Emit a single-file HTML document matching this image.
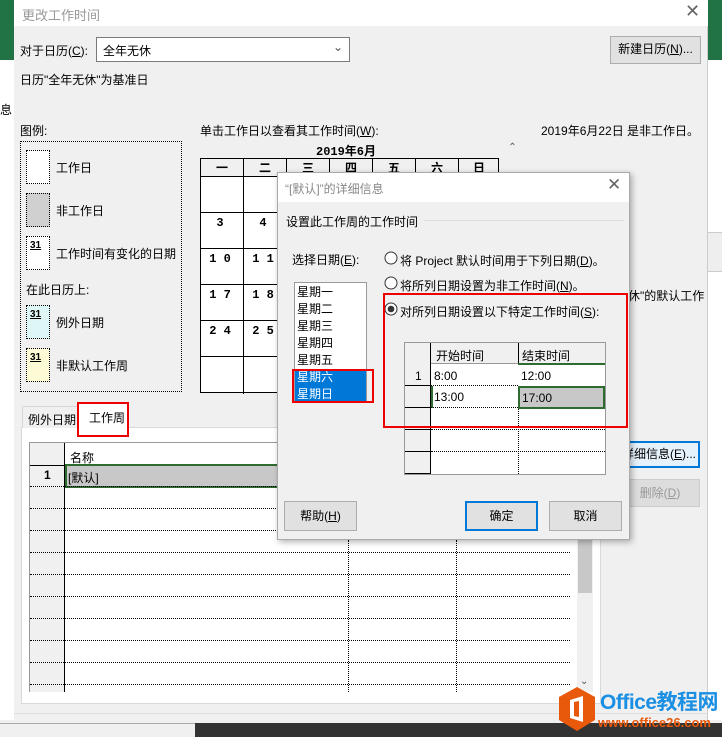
<!DOCTYPE html>
<html><head><meta charset="utf-8"><style>
*{box-sizing:border-box;margin:0;padding:0}
body{width:722px;height:737px;overflow:hidden;background:#f0f0f0;position:relative;font-family:"Liberation Sans","Noto Sans CJK SC",sans-serif;font-size:12px;color:#000}
.a{position:absolute;white-space:nowrap}
.btn{position:absolute;background:#e1e1e1;border:1px solid #adadad;text-align:center;font-size:12px;white-space:nowrap;overflow:hidden}
.dot{border:1px dotted #000}
.g{position:absolute;border-bottom:1px dotted #000}
</style></head><body>
<div class="a" style="left:0;top:0;width:14px;height:60px;background:#217346"></div>
<div class="a" style="left:0;top:60px;width:14px;height:660px;background:#fff"></div>
<div class="a" style="left:0;top:101px;width:14px;font-size:12px">息</div>
<div class="a" style="left:708px;top:0;width:14px;height:60px;background:#217346"></div>
<div class="a" style="left:708px;top:60px;width:14px;height:660px;background:#fff"></div>
<div class="a" style="left:708px;top:232px;width:14px;height:40px;background:#eee;border-top:1px solid #ccc;border-bottom:1px solid #ccc"></div>
<div class="a" style="left:14px;top:0;width:694px;height:723px;background:#f0f0f0;border-right:1px solid #ccc"></div>
<div class="a" style="left:14px;top:0;width:694px;height:26px;background:#fff"></div>
<div class="a" style="left:22px;top:5px;color:#999;font-size:13px">更改工作时间</div>
<div class="a" style="left:685px;top:1px;color:#666;font-size:18px">✕</div>
<div class="a" style="left:20px;top:42px">对于日历(<u>C</u>):</div>
<div class="a" style="left:96px;top:37px;width:254px;height:25px;background:#fff;border:1px solid #7a7a7a;padding:4px 6px">全年无休<span style="position:absolute;right:6px;top:2px;color:#555">⌄</span></div>
<div class="btn" style="left:610px;top:36px;width:91px;height:28px;line-height:25px">新建日历(<u>N</u>)...</div>
<div class="a" style="left:20px;top:71px">日历"全年无休"为基准日</div>
<div class="a" style="left:20px;top:122px">图例:</div>
<div class="a dot" style="left:20px;top:141px;width:162px;height:251px"></div>
<div class="a dot" style="left:26px;top:150px;width:24px;height:34px;background:#fff"></div>
<div class="a" style="left:56px;top:159px">工作日</div>
<div class="a dot" style="left:26px;top:193px;width:24px;height:34px;background:#d0d0d0"></div>
<div class="a" style="left:56px;top:202px">非工作日</div>
<div class="a dot" style="left:26px;top:236px;width:24px;height:34px;background:#fff"><b style="font-size:10px;text-decoration:underline;margin-left:3px">31</b></div>
<div class="a" style="left:56px;top:245px">工作时间有变化的日期</div>
<div class="a" style="left:26px;top:281px">在此日历上:</div>
<div class="a dot" style="left:26px;top:305px;width:24px;height:34px;background:#dff6f6"><b style="font-size:10px;text-decoration:underline;margin-left:3px">31</b></div>
<div class="a" style="left:56px;top:314px">例外日期</div>
<div class="a dot" style="left:26px;top:348px;width:24px;height:34px;background:#fdfbd6"><b style="font-size:10px;text-decoration:underline;margin-left:3px">31</b></div>
<div class="a" style="left:56px;top:357px">非默认工作周</div>
<div class="a" style="left:200px;top:122px">单击工作日以查看其工作时间(<u>W</u>):</div>
<div class="a" style="left:316px;top:142px;font-weight:bold;font-family:'Liberation Mono','Noto Sans CJK SC',monospace">2019年6月</div>
<svg class="a" style="left:200px;top:158px" width="300" height="236">
<rect x="0.5" y="0.5" width="298" height="234" fill="#fff" stroke="#000"/>
<rect x="1" y="1" width="297" height="17" fill="#f0f0f0"/>
<g stroke="#000"><line x1="0" y1="18.5" x2="300" y2="18.5"/><line x1="0" y1="54.5" x2="300" y2="54.5"/><line x1="0" y1="90.5" x2="300" y2="90.5"/><line x1="0" y1="126.5" x2="300" y2="126.5"/><line x1="0" y1="162.5" x2="300" y2="162.5"/><line x1="0" y1="198.5" x2="300" y2="198.5"/>
<line x1="43.5" y1="0" x2="43.5" y2="236"/><line x1="86.5" y1="0" x2="86.5" y2="236"/><line x1="129.5" y1="0" x2="129.5" y2="236"/><line x1="172.5" y1="0" x2="172.5" y2="236"/><line x1="215.5" y1="0" x2="215.5" y2="236"/><line x1="258.5" y1="0" x2="258.5" y2="236"/></g>
<g font-size="12" font-weight="bold" font-family="Liberation Mono,Noto Sans CJK SC,monospace" text-anchor="middle"><text x="22" y="14">一</text><text x="65" y="14">二</text><text x="108" y="14">三</text><text x="151" y="14">四</text><text x="194" y="14">五</text><text x="237" y="14">六</text><text x="279" y="14">日</text>
<text x="20" y="68">3</text><text x="63" y="68">4</text><text x="20" y="104">1 0</text><text x="63" y="104">1 1</text><text x="20" y="140">1 7</text><text x="63" y="140">1 8</text><text x="20" y="176">2 4</text><text x="63" y="176">2 5</text></g>
</svg>
<div class="a" style="left:504px;top:142px;width:17px;height:250px;background:#f0f0f0;font-size:10px;color:#555;text-align:center">⌃</div>
<div class="a" style="left:541px;top:122px">2019年6月22日 是非工作日。</div>
<div class="a" style="left:628px;top:287px">休"的默认工作</div>
<div class="a" style="left:21px;top:427px;width:580px;height:277px;background:#fff;border:1px solid #d9d9d9"></div>
<div class="a" style="left:22px;top:406px;width:56px;height:22px;border:1px solid #d9d9d9;border-bottom:none;padding:4px 0 0 5px;background:#f0f0f0">例外日期</div>
<div class="a" style="left:78px;top:402px;width:50px;height:26px;background:#fff;border:1px solid #d9d9d9;border-bottom:none;padding:6px 0 0 10px">工作周</div>
<div class="a" style="left:77px;top:402px;width:52px;height:35px;border:2px solid #e00"></div>
<div class="a" style="left:29px;top:442px;width:542px;height:250px;background:#fff;border-left:1px solid #999;border-top:1px solid #999"></div>
<div class="a" style="left:30px;top:443px;width:35px;height:249px;background:#f0f0f0;border-right:1px solid #000"></div>
<div class="a" style="left:70px;top:449px">名称</div>
<div class="a" style="left:65px;top:464px;width:290px;height:24px;background:#c8c8c8;border:2px solid #2e6b2e;padding:3px 0 0 1px">[默认]</div>
<div class="a" style="left:44px;top:468px;font-weight:bold">1</div>
<div class="a" style="left:30px;top:465px;width:35px;border-top:1px solid #000"></div>
<div class="g" style="left:30px;top:486px;width:540px"></div><div class="g" style="left:30px;top:508px;width:540px"></div><div class="g" style="left:30px;top:530px;width:540px"></div><div class="g" style="left:30px;top:552px;width:540px"></div><div class="g" style="left:30px;top:574px;width:540px"></div><div class="g" style="left:30px;top:596px;width:540px"></div><div class="g" style="left:30px;top:618px;width:540px"></div><div class="g" style="left:30px;top:640px;width:540px"></div><div class="g" style="left:30px;top:662px;width:540px"></div><div class="g" style="left:30px;top:684px;width:540px"></div>
<div class="a" style="left:348px;top:540px;height:152px;border-left:1px dotted #000"></div>
<div class="a" style="left:456px;top:540px;height:152px;border-left:1px dotted #000"></div>
<div class="a" style="left:577px;top:540px;width:16px;height:152px;background:#f0f0f0"></div>
<div class="a" style="left:578px;top:540px;width:14px;height:53px;background:#c8c8c8"></div>
<div class="a" style="left:580px;top:676px;font-size:10px;color:#555">⌄</div>
<div class="btn" style="left:620px;top:441px;width:80px;height:27px;border:2px solid #0078d7;background:#e5f1fb;line-height:22px;text-align:right;padding-right:4px">详细信息(<u>E</u>)...</div>
<div class="btn" style="left:620px;top:479px;width:80px;height:28px;color:#999;border-color:#ccc;background:#ddd;line-height:26px">删除(<u>D</u>)</div>
<div class="a" style="left:14px;top:713px;width:694px;border-top:1px solid #ddd"></div>
<div class="a" style="left:195px;top:723px;width:527px;height:14px;background:#333"></div>
<div class="a" style="left:0;top:723px;width:195px;height:14px;background:#f0f0f0;border-top:1px solid #aaa"></div>
<div class="a" style="left:277px;top:172px;width:353px;height:368px;background:#f0f0f0;border:1px solid #aaa;box-shadow:2px 2px 6px rgba(0,0,0,.3)"></div>
<div class="a" style="left:278px;top:173px;width:351px;height:29px;background:#fff"></div>
<div class="a" style="left:285px;top:180px;color:#888">“[默认]”的详细信息</div>
<div class="a" style="left:607px;top:175px;color:#666;font-size:17px">✕</div>
<div class="a" style="left:286px;top:213px">设置此工作周的工作时间</div>
<div class="a" style="left:424px;top:220px;width:200px;border-top:1px solid #ddd"></div>
<div class="a" style="left:292px;top:251px">选择日期(<u>E</u>):</div>
<div class="a" style="left:294px;top:282px;width:73px;height:121px;background:#fff;border:1px solid #999"></div>
<div class="a" style="left:297px;top:284px;line-height:17px">星期一<br>星期二<br>星期三<br>星期四<br>星期五</div>
<div class="a" style="left:295px;top:369px;width:71px;height:33px;background:#0078d7;color:#fff;line-height:16.5px;padding-left:2px">星期六<br>星期日</div>
<div class="a" style="left:292px;top:369px;width:82px;height:34px;border:2px solid #e00"></div>
<svg class="a" style="left:384px;top:250px" width="16" height="70"><g fill="#fff" stroke="#333"><circle cx="7" cy="8" r="6"/><circle cx="7" cy="33" r="6"/><circle cx="7" cy="59" r="6"/></g><circle cx="7" cy="59" r="3.3" fill="#333"/></svg>
<div class="a" style="left:400px;top:252px">将 Project 默认时间用于下列日期(<u>D</u>)。</div>
<div class="a" style="left:400px;top:277px">将所列日期设置为非工作时间(<u>N</u>)。</div>
<div class="a" style="left:400px;top:303px">对所列日期设置以下特定工作时间(<u>S</u>):</div>
<div class="a" style="left:404px;top:342px;width:202px;height:133px;background:#fff;border:1px solid #999"></div>
<div class="a" style="left:405px;top:343px;width:200px;height:21px;background:#f0f0f0;border-bottom:1px solid #999"></div>
<div class="a" style="left:405px;top:343px;width:26px;height:131px;background:#f0f0f0;border-right:1px solid #000"></div>
<div class="a" style="left:518px;top:343px;height:21px;border-left:1px solid #000"></div>
<div class="a" style="left:436px;top:347px">开始时间</div>
<div class="a" style="left:522px;top:347px">结束时间</div>
<div class="a" style="left:518px;top:363px;width:87px;border-top:2px solid #2e6b2e"></div>
<div class="a" style="left:415px;top:369px">1</div>
<div class="a" style="left:434px;top:369px">8:00</div>
<div class="a" style="left:521px;top:369px">12:00</div>
<div class="a" style="left:431px;top:386px;width:87px;height:22px;border-left:2px solid #2e6b2e"></div>
<div class="a" style="left:434px;top:390px">13:00</div>
<div class="a" style="left:518px;top:386px;width:87px;height:23px;background:#c8c8c8;border:2px solid #2e6b2e;padding:3px 0 0 2px">17:00</div>
<div class="g" style="left:431px;top:385px;width:87px"></div>
<div class="g" style="left:431px;top:407px;width:87px"></div>
<div class="g" style="left:431px;top:429px;width:174px"></div><div class="g" style="left:431px;top:451px;width:174px"></div>
<div class="a" style="left:405px;top:385px;width:26px;border-top:1px solid #000"></div><div class="a" style="left:405px;top:407px;width:26px;border-top:1px solid #000"></div><div class="a" style="left:405px;top:429px;width:26px;border-top:1px solid #000"></div><div class="a" style="left:405px;top:451px;width:26px;border-top:1px solid #000"></div><div class="a" style="left:405px;top:473px;width:26px;border-top:1px solid #000"></div>
<div class="a" style="left:518px;top:409px;height:65px;border-left:1px dotted #000"></div>
<div class="a" style="left:383px;top:293px;width:245px;height:135px;border:2px solid #e00"></div>
<div class="btn" style="left:284px;top:501px;width:73px;height:30px;line-height:28px">帮助(<u>H</u>)</div>
<div class="btn" style="left:465px;top:501px;width:73px;height:30px;line-height:26px;border:2px solid #0078d7">确定</div>
<div class="btn" style="left:549px;top:501px;width:73px;height:30px;line-height:28px">取消</div>
<svg class="a" style="left:557px;top:686px" width="40" height="46"><polygon points="20,1 38,11 38,34 20,45 2,34 2,11" fill="#e8590c"/><path d="M13 14 L26 10 L26 36 L13 32 Z M17 16 V30 L22 31 V15 Z" fill="#fff" fill-rule="evenodd"/></svg>
<div class="a" style="left:600px;top:686px;color:#1a8fe3;font-weight:bold;font-size:21px;letter-spacing:-0.5px">Office教程网</div>
<div class="a" style="left:598px;top:715px;color:#e8590c;font-weight:bold;font-size:13px">www.office26.com</div>
</body></html>
